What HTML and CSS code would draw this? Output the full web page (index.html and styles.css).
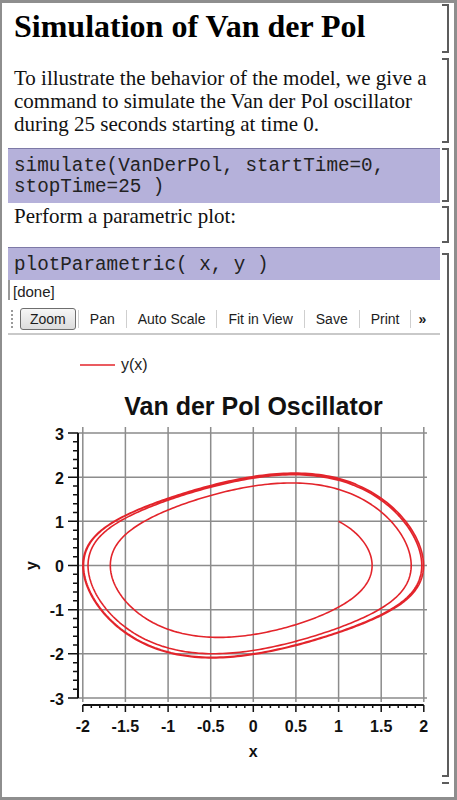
FILE: index.html
```html
<!DOCTYPE html>
<html>
<head>
<meta charset="utf-8">
<title>Simulation of Van der Pol</title>
<link rel="stylesheet" href="styles.css">
</head>
<body>
<div class="frame">
  <div class="cell cell-title">
    <div class="cell-main"><h1 class="title">Simulation of Van der Pol</h1></div>
    <div class="bracket"></div>
  </div>
  <div class="cell cell-text">
    <div class="cell-main"><p class="para">To illustrate the behavior of the model, we give a command to simulate the Van der Pol oscillator during 25 seconds starting at time 0.</p></div>
    <div class="bracket"></div>
  </div>
  <div class="cell cell-code">
    <div class="cell-main code">simulate(VanDerPol, startTime=0,<br>stopTime=25 )</div>
    <div class="bracket"></div>
  </div>
  <div class="cell cell-text2">
    <div class="cell-main"><p class="para">Perform a parametric plot:</p></div>
    <div class="bracket"></div>
  </div>
  <div class="cell cell-group">
    <div class="cell-main">
      <div class="code code2">plotParametric( x, y )</div>
      <div class="done">[done]</div>
      <div class="toolbar">
        <span class="grip"></span>
        <span class="tb-btn active">Zoom</span>
        <span class="tb-sep"></span>
        <span class="tb-btn">Pan</span>
        <span class="tb-sep"></span>
        <span class="tb-btn">Auto Scale</span>
        <span class="tb-sep"></span>
        <span class="tb-btn">Fit in View</span>
        <span class="tb-sep"></span>
        <span class="tb-btn">Save</span>
        <span class="tb-sep"></span>
        <span class="tb-btn">Print</span>
        <span class="tb-sep"></span>
        <span class="tb-btn more">»</span>
      </div>
      <svg class="plot" id="plot" width="432" height="444" viewBox="8 335 432 444" xmlns="http://www.w3.org/2000/svg">
        <line class="legend-line" x1="80" y1="365" x2="115" y2="365"/>
        <text class="legend-text" x="121" y="370">y(x)</text>
        <text class="plot-title" x="253.5" y="415" text-anchor="middle">Van der Pol Oscillator</text>
        <g id="geom"></g>
        <g class="ylabels" text-anchor="end">
          <text x="64" y="440">3</text>
          <text x="64" y="484">2</text>
          <text x="64" y="528">1</text>
          <text x="64" y="572">0</text>
          <text x="64" y="616">-1</text>
          <text x="64" y="660">-2</text>
          <text x="64" y="705">-3</text>
        </g>
        <g class="xlabels" text-anchor="middle">
          <text x="82.8" y="732">-2</text>
          <text x="125.4" y="732">-1.5</text>
          <text x="168" y="732">-1</text>
          <text x="210.7" y="732">-0.5</text>
          <text x="253.3" y="732">0</text>
          <text x="295.9" y="732">0.5</text>
          <text x="338.5" y="732">1</text>
          <text x="381.2" y="732">1.5</text>
          <text x="423.8" y="732">2</text>
        </g>
        <text class="axis-title" x="253.3" y="757" text-anchor="middle">x</text>
        <text class="axis-title" x="37" y="565.5" text-anchor="middle" transform="rotate(-90 37 565.5)">y</text>
      </svg>
    </div>
    <div class="bracket"></div>
  </div>
  <div class="cell cell-end">
    <div class="cell-main"></div>
    <div class="bracket"></div>
  </div>
</div>
<script src="script.js"></script>
</body>
</html>
```

FILE: styles.css
```css
* { box-sizing: border-box; }
html, body { margin: 0; padding: 0; background: #fff; }
body { width: 457px; height: 800px; overflow: hidden; }

.frame {
  width: 457px;
  height: 800px;
  border: 3px solid #8e8e8e;
  border-left-width: 2px;
  padding: 0 5px 0 6px;
  display: flex;
  flex-direction: column;
  background: #fff;
}

.cell { display: flex; }
.cell-main { flex: 1; min-width: 0; }
.bracket {
  width: 7px;
  margin-left: 2px;
  border: 2px solid #5c5c5c;
  border-left: none;
}

.title {
  margin: 0;
  font: bold 32px/40px "Liberation Serif", "Times New Roman", serif;
  color: #000;
}
.para {
  margin: 0;
  font: 21px/23px "Liberation Serif", "Times New Roman", serif;
  color: #111;
}

.cell-title .cell-main { padding: 3px 0 10px 6px; }
.cell-title .bracket { margin: 1px 0 3px 2px; }

.cell-text .cell-main { padding: 11px 0 12px 6px; }
.cell-text .bracket { margin: 2px 0 5px 2px; }

.code {
  background: #b5b1da;
  border-top: 1px solid #7d79a6;
  font: 19.3px/21px "Liberation Mono", "Courier New", monospace;
  color: #222;
  padding: 7px 0 5px 6px;
}
.cell-code .bracket { margin: 0 0 1px 2px; }

.cell-text2 .cell-main { padding: 2px 0 19px 6px; }
.cell-text2 .bracket { margin: 3px 0 4px 2px; }

.code2 { padding: 7px 0 4px 6px; }
.cell-group .bracket { margin: 6px 0 2px 2px; }

.done {
  height: 20px;
  border-left: 2px solid #9a9a9a;
  padding: 3px 0 0 3px;
  font: 15px/17px "Liberation Sans", Arial, sans-serif;
  color: #222;
}

.toolbar {
  height: 35px;
  padding: 5px 0 0 3px;
  border-bottom: 2px solid #c9c9c9;
  display: flex;
  align-items: center;
}
.grip {
  width: 2px;
  height: 18px;
  border-left: 2px dotted #9a9a9a;
  margin-right: 7px;
}
.tb-btn {
  padding: 0 11px;
  font: 14px/20px "Liberation Sans", Arial, sans-serif;
  color: #1c1c1c;
}
.tb-btn.active {
  height: 22px;
  padding: 0 9px;
  border: 1px solid #6e6e6e;
  border-radius: 3px;
  background: linear-gradient(#f6f6f6, #dcdcdc);
  margin-right: 2px;
}
.tb-btn.more { font-weight: bold; padding: 0 7px; }
.tb-sep {
  width: 1px;
  height: 18px;
  background: #cfcfcf;
}

.plot { display: block; }
.legend-line { stroke: #e3242b; stroke-width: 1.6; }
.legend-text { font: 16px "Liberation Sans", Arial, sans-serif; fill: #222; }
.plot-title { font: bold 25px "Liberation Sans", Arial, sans-serif; fill: #111; }
.ylabels text, .xlabels text, .axis-title {
  font: bold 16px "Liberation Sans", Arial, sans-serif;
  fill: #111;
}
.grid { stroke: #8c8c8c; stroke-width: 1.5; fill: none; }
.axis { stroke: #111; stroke-width: 1.5; fill: none; }
.axis-main { stroke: #111; stroke-width: 2; fill: none; }
.curve { stroke: #e3242b; stroke-width: 1.6; fill: none; stroke-linejoin: round; }

.cell-end .bracket { margin: 3px 0 0 2px; border-bottom: none; }
```

FILE: script.js
```js
(function () {
  var NS = 'http://www.w3.org/2000/svg';
  var g = document.getElementById('geom');
  function X(x) { return 253.3 + x * 85.25; }
  function Y(y) { return 565.5 - y * 44.17; }
  function path(d, cls) {
    var p = document.createElementNS(NS, 'path');
    p.setAttribute('d', d);
    p.setAttribute('class', cls);
    g.appendChild(p);
  }
  var d = '', i, v;
  for (i = 0; i <= 8; i++) {
    v = X(-2 + i * 0.5).toFixed(1);
    d += 'M' + v + ' 427V702';
  }
  for (i = -3; i <= 3; i++) {
    v = Y(i).toFixed(1);
    d += 'M78 ' + v + 'H427';
  }
  path(d, 'grid');

  var a = '';
  for (i = 0; i <= 30; i++) {
    v = Y(3 - i * 0.2).toFixed(1);
    a += 'M' + (i % 5 === 0 ? 68 : 73) + ' ' + v + 'H78';
  }
  for (i = 0; i <= 40; i++) {
    v = X(-2 + i * 0.1).toFixed(1);
    a += 'M' + v + ' 705V' + (i % 5 === 0 ? 712 : 708);
  }
  path(a, 'axis');
  path('M78 ' + Y(3).toFixed(1) + 'V' + Y(-3).toFixed(1) + 'M' + X(-2).toFixed(1) + ' 705H' + X(2).toFixed(1), 'axis-main');

  var x = 1, y = 1, lam = 0.3, h = 0.005, n = Math.round(25 / h);
  function fy(x, y) { return -x + lam * (1 - x * x) * y; }
  var c = 'M' + X(x).toFixed(2) + ' ' + Y(y).toFixed(2);
  for (i = 1; i <= n; i++) {
    var k1x = y, k1y = fy(x, y);
    var k2x = y + h / 2 * k1y, k2y = fy(x + h / 2 * k1x, y + h / 2 * k1y);
    var k3x = y + h / 2 * k2y, k3y = fy(x + h / 2 * k2x, y + h / 2 * k2y);
    var k4x = y + h * k3y, k4y = fy(x + h * k3x, y + h * k3y);
    x += h / 6 * (k1x + 2 * k2x + 2 * k3x + k4x);
    y += h / 6 * (k1y + 2 * k2y + 2 * k3y + k4y);
    if (i % 4 === 0 || i === n) c += 'L' + X(x).toFixed(2) + ' ' + Y(y).toFixed(2);
  }
  path(c, 'curve');
})();
```
